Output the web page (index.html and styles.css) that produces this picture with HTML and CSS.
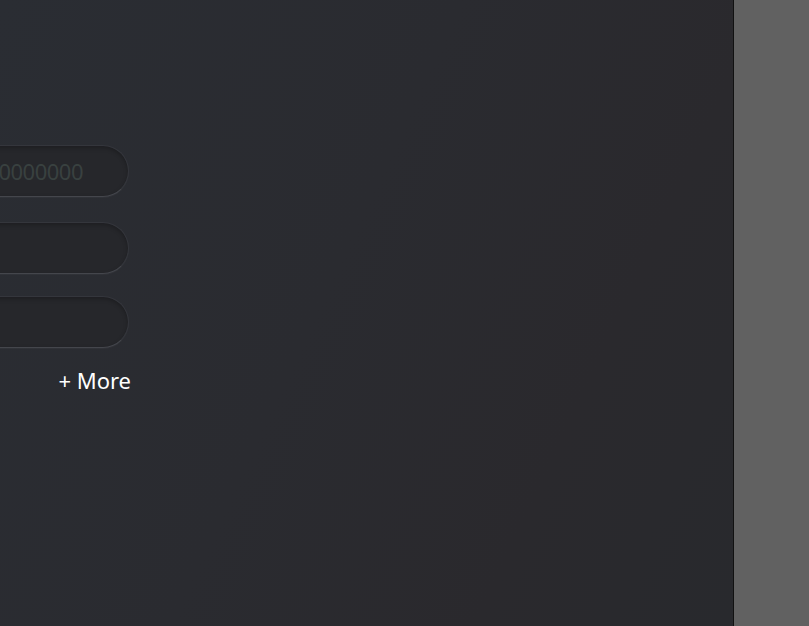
FILE: index.html
```html
<!DOCTYPE html>
<html>
<head>
    <meta charset="utf-8">
    <link rel="stylesheet" href="styles.css">
</head>
<body>
    <div class="panel">
        <form class="fields">
            <input class="pill" type="text" value="0000000" readonly>
            <input class="pill" type="text" readonly>
            <input class="pill last" type="text" readonly>
            <a class="more">+ More</a>
        </form>
    </div>
    <div class="divider"></div>
    <div class="side"></div>
</body>
</html>
```

FILE: styles.css
```css
* {
    margin: 0;
    padding: 0;
    box-sizing: border-box;
}

body {
    display: flex;
    height: 100vh;
    overflow: hidden;
    background-color: #616161;
    font-family: 'Noto Sans', sans-serif;
}

/* Dark panel with a faint diagonal gradient */
.panel {
    flex: 0 0 733px;
    background: linear-gradient(115deg, #2a2d33 0%, #2a2b30 45%, #2a292d 75%, #28292d 100%);
}

.divider {
    flex: 0 0 1px;
    background-color: #111;
}

.side {
    flex: 1;
    background-color: #616161;
}

.fields {
    display: flex;
    flex-direction: column;
    align-items: flex-end;
    width: 330px;
    margin-left: -201px;
    padding-top: 145px;
}

.pill {
    width: 100%;
    height: 52px;
    border-radius: 26px;
    border: 1px solid #34363c;
    border-bottom-color: #44464c;
    background-color: #26272b;
    box-shadow: inset 0 2px 4px rgba(0, 0, 0, 0.25), 0 1px 0 rgba(255, 255, 255, 0.03);
    margin-bottom: 25px;
    padding: 0 45px 0 20px;
    font-family: 'Noto Sans', sans-serif;
    font-size: 22px;
    letter-spacing: -0.5px;
    color: #394140;
    text-align: right;
    outline: none;
}

.pill.last {
    margin-top: -3px;
    margin-bottom: 16px;
}

.more {
    color: #fff;
    font-size: 22px;
    line-height: 32px;
    margin-right: -2px;
    cursor: pointer;
}
```
